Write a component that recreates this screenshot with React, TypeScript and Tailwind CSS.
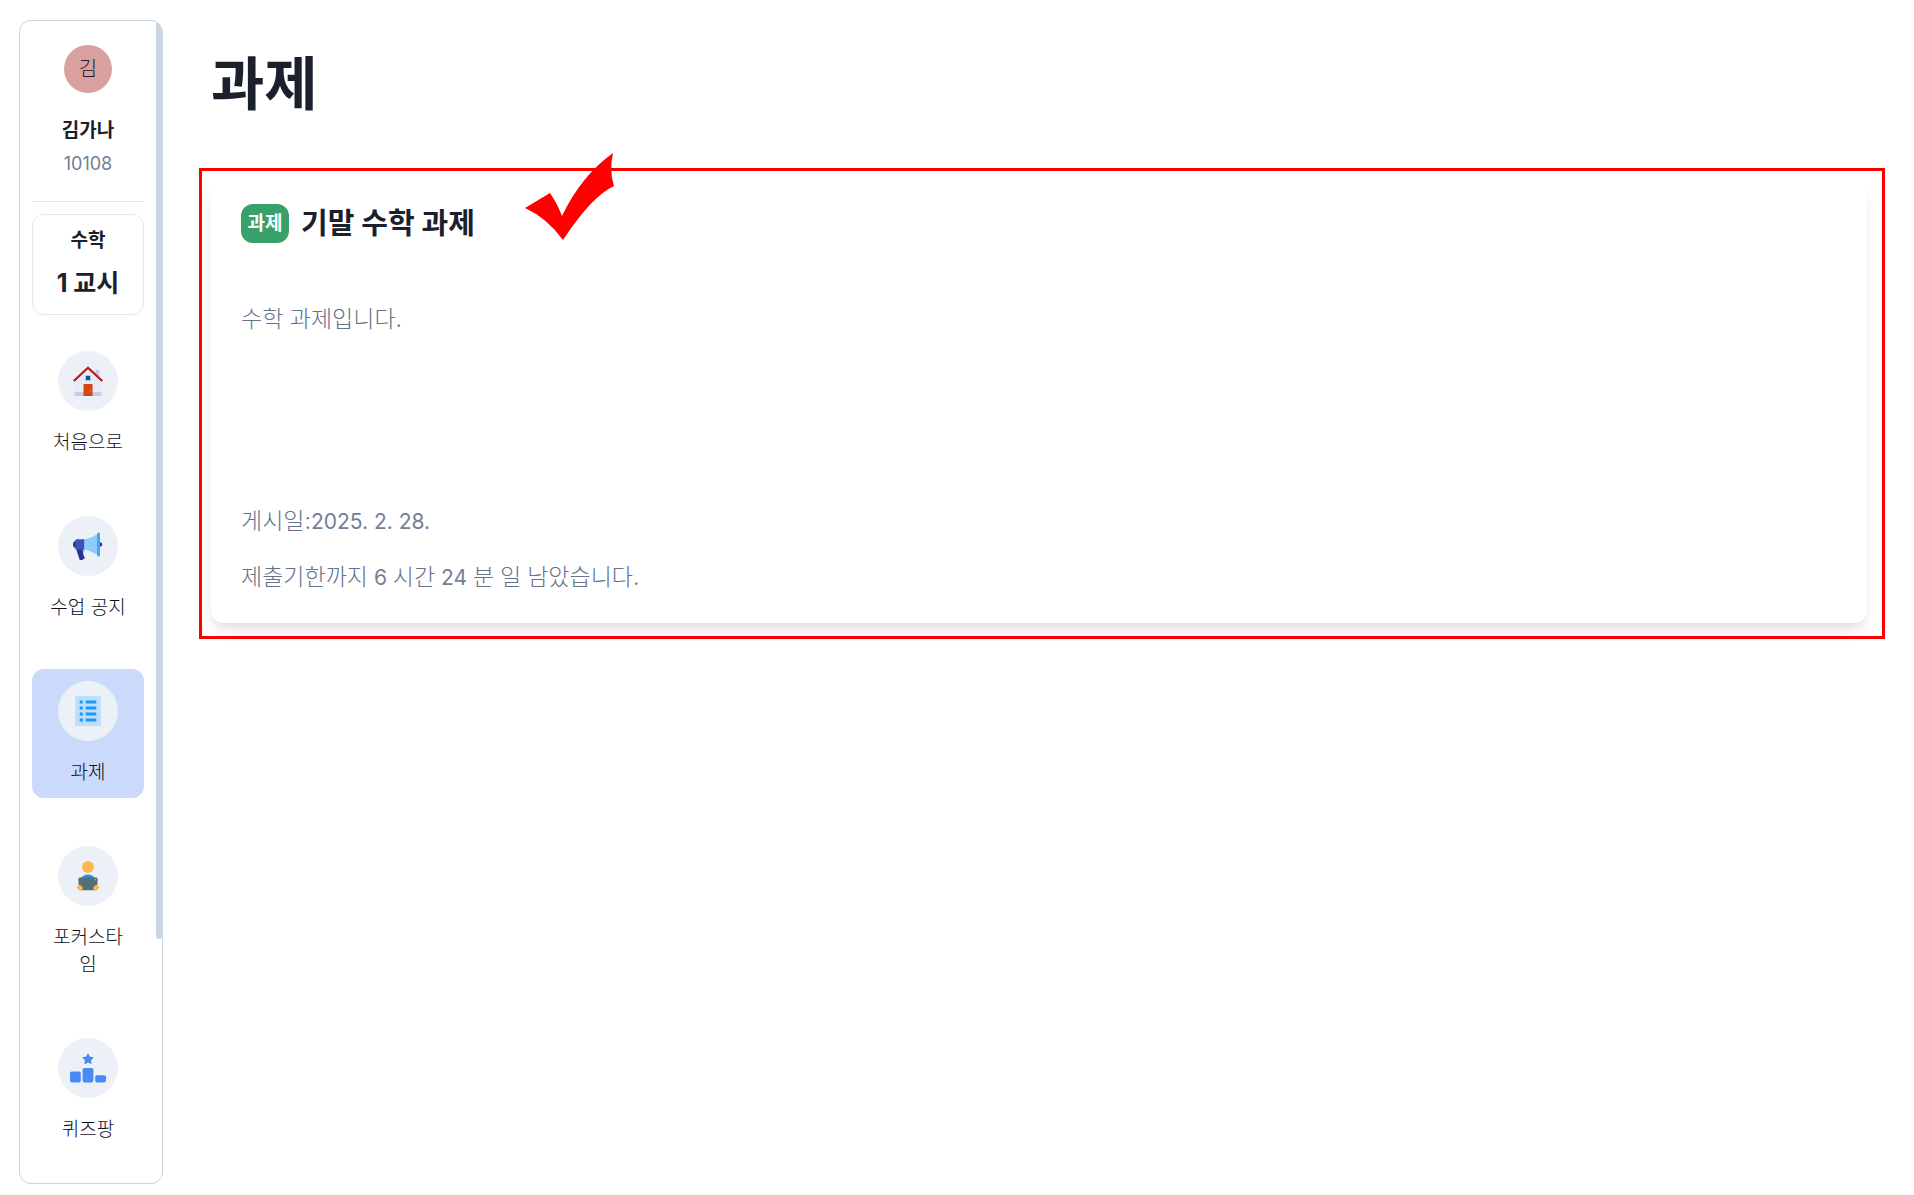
import type { ReactNode } from "react";
import { FcAdvertising, FcHome, FcReadingEbook, FcViewDetails } from "react-icons/fc";
import { FaRankingStar } from "react-icons/fa6";

type NavItem = { label: string; icon: ReactNode; active?: boolean };

const navItems: NavItem[] = [
  { label: "처음으로", icon: <FcHome size={36} /> },
  { label: "수업 공지", icon: <FcAdvertising size={36} /> },
  { label: "과제", icon: <FcViewDetails size={36} />, active: true },
  { label: "포커스타임", icon: <FcReadingEbook size={36} /> },
  { label: "퀴즈팡", icon: <FaRankingStar size={36} color="#4a8af4" /> },
];

function Sidebar() {
  return (
    <aside className="relative flex w-36 shrink-0 flex-col overflow-hidden rounded-xl border border-[#cbd5e0] pt-6 pl-3">
      <div className="flex w-28 flex-col items-center border-b border-[#dbe4ea] pb-[23px]">
        <div className="flex size-12 items-center justify-center rounded-full bg-[#d9a0a0] text-xl leading-6 font-light">김</div>
        <p className="mt-6 text-[19px] leading-7 font-bold">김가나</p>
        <p className="mt-[5px] text-lg leading-7 text-[#718096]">10108</p>
      </div>
      <div className="mt-3 flex w-28 flex-col items-center rounded-xl border border-[#e2e8f0] pt-3 pb-[15px]">
        <p className="text-[19px] leading-7 font-bold">수학</p>
        <p className="mt-3 text-[25px] leading-8 font-bold">1 교시</p>
      </div>
      <nav className="mt-6 flex w-28 flex-col gap-9">
        {navItems.map((item) => (
          <a
            key={item.label}
            href="#"
            aria-current={item.active ? "page" : undefined}
            className={`flex flex-col items-center rounded-xl p-3 ${item.active ? "bg-[#cbd9fb]" : ""}`}
          >
            <span className="flex size-[60px] items-center justify-center rounded-full bg-[#ebf1f6]">{item.icon}</span>
            <span className="mt-[18px] max-w-20 text-center text-[19px] leading-[27px] font-light break-all text-[#0b101a]">{item.label}</span>
          </a>
        ))}
      </nav>
      <div className="absolute top-0 right-0 h-[79%] w-1.5 rounded-full bg-[#cbd5e2]" />
    </aside>
  );
}

function Figure({ children }: { children: ReactNode }) {
  return <span className="text-[21px] leading-none font-normal text-[#718096]">{children}</span>;
}

function AssignmentCard() {
  return (
    <section className="relative mt-12 border-[3px] border-[#ff0000] pt-3 pr-[15px] pb-[13px] pl-[9px]">
      <article className="rounded-xl bg-white px-[30px] pt-[21px] pb-[30px] shadow-[0_10px_15px_-3px_rgba(0,0,0,0.1),0_4px_6px_-2px_rgba(0,0,0,0.05)]">
        <div className="flex items-center gap-3">
          <span className="flex h-[39px] w-12 items-center justify-center rounded-xl bg-[#38a169] text-[19px] leading-6 font-bold text-white">
            과제
          </span>
          <h2 className="text-[29px] leading-9 font-bold">기말 수학 과제</h2>
        </div>
        <div className="text-[23px] leading-8 font-light text-[#64728a]">
          <p className="mt-[60px]">수학 과제입니다.</p>
          <p className="mt-[170px]">
            게시일:<Figure>2025. 2. 28.</Figure>
          </p>
          <p className="mt-6">
            제출기한까지<Figure> 6 </Figure>시간<Figure> 24 </Figure>분<Figure> </Figure>일<Figure> </Figure>남았습니다.
          </p>
        </div>
      </article>
      <svg
        viewBox="0 0 90 88"
        className="absolute -top-[18px] left-[323px] h-[88px] w-[90px]"
        fill="#ff0000"
        aria-hidden="true"
      >
        <path d="M0 55 L25 40 Q33 52 37 63 Q56 23 88 0 Q84 18 89 33 Q67 43 38 87 Q22 65 0 55Z" />
      </svg>
    </section>
  );
}

export default function App() {
  return (
    <div className="flex h-screen gap-9 overflow-hidden bg-white pt-5 pr-[29px] pb-[11px] pl-[19px] font-['Inter','Noto_Sans_CJK_KR',sans-serif] text-[#1a202c]">
      <Sidebar />
      <main className="min-w-0 flex-1 pt-6">
        <h1 className="pt-1 pl-3 text-[58px] leading-[72px] font-bold">과제</h1>
        <AssignmentCard />
      </main>
    </div>
  );
}
